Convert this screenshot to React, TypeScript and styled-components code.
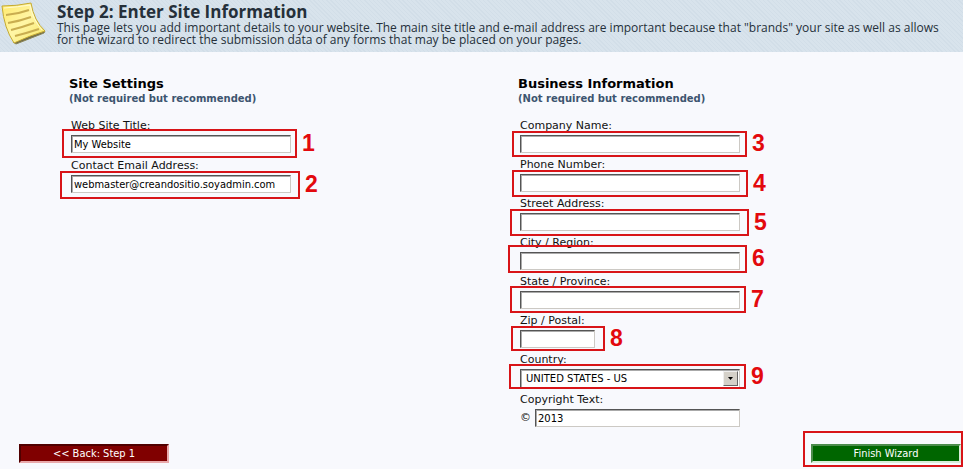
import React, { useId } from "react";
import styled, { createGlobalStyle } from "styled-components";

const GlobalStyle = createGlobalStyle`
  *, *::before, *::after { box-sizing: border-box; }
  body {
    margin: 0;
    background: #f8f9fd;
    color: #111;
    font: 11px/14px "DejaVu Sans", Verdana, sans-serif;
  }
`;

const Header = styled.header`
  display: flex;
  gap: 9px;
  min-height: 52px;
  background: repeating-linear-gradient(45deg, #d2dee8 0 1px, #d8e3ec 1px 3px);
  color: #25303a;
  font-family: "Open Sans", "Trebuchet MS", sans-serif;
`;

const NoteIcon = styled.svg`
  flex: none;
  width: 48px;
  height: 48px;
`;

const HeaderText = styled.div`
  flex: 1;
  padding-right: 12px;
`;

const Title = styled.h1`
  margin: 0;
  padding-top: 1px;
  font-size: 17px;
  line-height: 21px;
`;

const Intro = styled.p`
  margin: 0;
  font-size: 12px;
  line-height: 12px;
`;

const Columns = styled.div`
  display: grid;
  grid-template-columns: 1fr 1fr;
  column-gap: 4px;
  padding: 24px 0 0 69px;
`;

const SectionTitle = styled.h2`
  margin: 0;
  color: #000;
  font-size: 13px;
  line-height: 16px;
`;

const SectionNote = styled.p`
  margin: 0 0 14px;
  color: #3d5570;
  font-size: 10px;
  font-weight: bold;
  line-height: 13px;
`;

const FieldList = styled.div<{ $gap: number }>`
  display: flex;
  flex-direction: column;
  gap: ${(p) => p.$gap}px;
  padding-left: 2px;
`;

const FieldBlock = styled.div`
  display: flex;
  flex-direction: column;
  align-items: flex-start;
  gap: 2px;
`;

const ControlWrap = styled.div`
  position: relative;
  display: flex;
  align-items: center;
  gap: 4px;
  font-size: 11px;
`;

const TextInput = styled.input<{ $width: number; $wide?: boolean }>`
  width: ${(p) => p.$width}px;
  height: 18px;
  margin: 0;
  padding: 2px 1px 1px 2px;
  border: 1px solid;
  border-color: #555 #ccc9c4 #ccc9c4 #555;
  border-radius: 0;
  box-shadow: inset 1px 1px #aaa;
  background: #fff;
  color: #000;
  font-family: ${(p) => (p.$wide ? '"DejaVu Sans", Verdana' : '"DejaVu Sans Condensed", Tahoma')}, sans-serif;
  font-size: ${(p) => (p.$wide ? 10 : 11)}px;
`;

const SelectShell = styled.div`
  display: grid;
  grid-template-columns: 1fr 17px;
  width: 220px;
  height: 19px;
  border: 1px solid;
  border-color: #555 #ccc9c4 #ccc9c4 #555;
  box-shadow: inset 1px 1px #aaa;
  background: #fff;
`;

const CountrySelect = styled.select`
  grid-area: 1 / 1 / 2 / 3;
  width: 100%;
  margin: 0;
  padding: 0 18px 0 5px;
  border: 0;
  appearance: none;
  background: transparent;
  color: #000;
  font: 10px/16px "DejaVu Sans", Verdana, sans-serif;
`;

const DropArrow = styled.svg`
  grid-area: 1 / 2 / 2 / 3;
  width: 15px;
  height: 15px;
  margin: 1px 0 0 1px;
  border: 1px solid;
  border-color: #eee #666 #666 #eee;
  background: #d4d0c8;
  pointer-events: none;
`;

interface Mark {
  label?: string;
  x: number;
  y: number;
  w: number;
  h: number;
}

const MarkBox = styled.span<{ $m: Mark }>`
  position: absolute;
  left: ${(p) => p.$m.x}px;
  top: ${(p) => p.$m.y}px;
  width: ${(p) => p.$m.w}px;
  height: ${(p) => p.$m.h}px;
  border: 2px solid #d81418;
  pointer-events: none;
`;

const MarkNumber = styled.span`
  position: absolute;
  left: 100%;
  top: 50%;
  margin: -13px 0 0 7px;
  color: #e3090d;
  font: bold 23px/24px "Liberation Sans", Arial, sans-serif;
`;

const Footer = styled.footer`
  display: flex;
  justify-content: space-between;
  padding: 17px 2px 6px 19px;
`;

const ButtonWrap = styled.div`
  position: relative;
`;

const WizardButton = styled.button<{ $kind: "back" | "finish" }>`
  display: block;
  width: 150px;
  height: 19px;
  padding: 1px 0 0;
  border: 2px solid;
  border-color: ${(p) => (p.$kind === "back" ? "#500000 #e9a9ab #e9a9ab #500000" : "#4c8c4c #d9ecd9 #d9ecd9 #4c8c4c")};
  background: ${(p) => (p.$kind === "back" ? "#800000" : "#006600")};
  color: #fff;
  font: 11px/14px "DejaVu Sans Condensed", Tahoma, sans-serif;
`;

function Annotation({ mark }: { mark: Mark }) {
  return <MarkBox $m={mark}>{mark.label && <MarkNumber>{mark.label}</MarkNumber>}</MarkBox>;
}

interface FieldProps {
  label: string;
  value?: string;
  width?: number;
  prefix?: string;
  wide?: boolean;
  mark?: Mark;
}

function Field({ label, value = "", width = 220, prefix, wide, mark }: FieldProps) {
  const id = useId();
  return (
    <FieldBlock>
      <label htmlFor={id}>{label}</label>
      <ControlWrap>
        {prefix && <span>{prefix}</span>}
        <TextInput id={id} type="text" defaultValue={value} $width={width} $wide={wide} />
        {mark && <Annotation mark={mark} />}
      </ControlWrap>
    </FieldBlock>
  );
}

const siteFields: FieldProps[] = [
  { label: "Web Site Title:", value: "My Website", mark: { label: "1", x: -9, y: -6, w: 235, h: 29 } },
  {
    label: "Contact Email Address:",
    value: "webmaster@creandositio.soyadmin.com",
    mark: { label: "2", x: -11, y: -4, w: 240, h: 28 },
  },
];

const businessFields: FieldProps[] = [
  { label: "Company Name:", mark: { label: "3", x: -8, y: -4, w: 235, h: 26 } },
  { label: "Phone Number:", mark: { label: "4", x: -8, y: -4, w: 236, h: 27 } },
  { label: "Street Address:", mark: { label: "5", x: -10, y: -4, w: 239, h: 27 } },
  { label: "City / Region:", mark: { label: "6", x: -12, y: -7, w: 239, h: 28 } },
  { label: "State / Province:", mark: { label: "7", x: -10, y: -5, w: 236, h: 27 } },
  { label: "Zip / Postal:", width: 75, mark: { label: "8", x: -9, y: -4, w: 94, h: 25 } },
];

export default function App() {
  return (
    <>
      <GlobalStyle />
      <Header>
        <NoteIcon viewBox="0 0 48 48" aria-hidden="true">
          <defs>
            <linearGradient id="paper" x1="0" y1="0" x2="1" y2="1">
              <stop offset="0" stopColor="#ffe96b" />
              <stop offset="0.5" stopColor="#fff6a6" />
              <stop offset="1" stopColor="#f7e55f" />
            </linearGradient>
          </defs>
          <path d="M13 42 L45 31 L44 33 L16 44Z" fill="#6f6a48" stroke="#8c8655" />
          <path d="M2 6 Q17 6 31 3 Q34 21 45 31 Q31 35 14 43 Q4 28 2 6Z" fill="url(#paper)" stroke="#c5aa32" />
          <path d="M4 8 Q18 7 30 5 Q33 20 42 30" fill="none" stroke="#fffbd0" />
          <path d="M6 15 Q18 14 29 10 M8 23 Q20 21 31 17 M11 30 Q23 27 34 23 M15 36 Q27 33 39 29" fill="none" stroke="#c9ad50" strokeWidth="2" />
        </NoteIcon>
        <HeaderText>
          <Title>Step 2: Enter Site Information</Title>
          <Intro>
            This page lets you add important details to your website. The main site title and e-mail address are
            important because that "brands" your site as well as allows for the wizard to redirect the submission data
            of any forms that may be placed on your pages.
          </Intro>
        </HeaderText>
      </Header>
      <main>
        <Columns>
          <section>
            <SectionTitle>Site Settings</SectionTitle>
            <SectionNote>(Not required but recommended)</SectionNote>
            <FieldList $gap={6}>
              {siteFields.map((f) => (
                <Field key={f.label} {...f} />
              ))}
            </FieldList>
          </section>
          <section>
            <SectionTitle>Business Information</SectionTitle>
            <SectionNote>(Not required but recommended)</SectionNote>
            <FieldList $gap={5}>
              {businessFields.map((f) => (
                <Field key={f.label} {...f} />
              ))}
              <FieldBlock>
                <label htmlFor="country">Country:</label>
                <ControlWrap>
                  <SelectShell>
                    <CountrySelect id="country" defaultValue="US">
                      <option value="US">UNITED STATES - US</option>
                    </CountrySelect>
                    <DropArrow viewBox="0 0 13 13" aria-hidden="true">
                      <path d="M4 5h5L6.500 8z" fill="#000" />
                    </DropArrow>
                  </SelectShell>
                  <Annotation mark={{ label: "9", x: -11, y: -5, w: 237, h: 25 }} />
                </ControlWrap>
              </FieldBlock>
              <Field label="Copyright Text:" value="2013" prefix="©" width={205} wide />
            </FieldList>
          </section>
        </Columns>
      </main>
      <Footer>
        <WizardButton type="button" $kind="back">
          &lt;&lt; Back: Step 1
        </WizardButton>
        <ButtonWrap>
          <WizardButton type="button" $kind="finish">
            Finish Wizard
          </WizardButton>
          <Annotation mark={{ x: -8, y: -13, w: 160, h: 36 }} />
        </ButtonWrap>
      </Footer>
    </>
  );
}
